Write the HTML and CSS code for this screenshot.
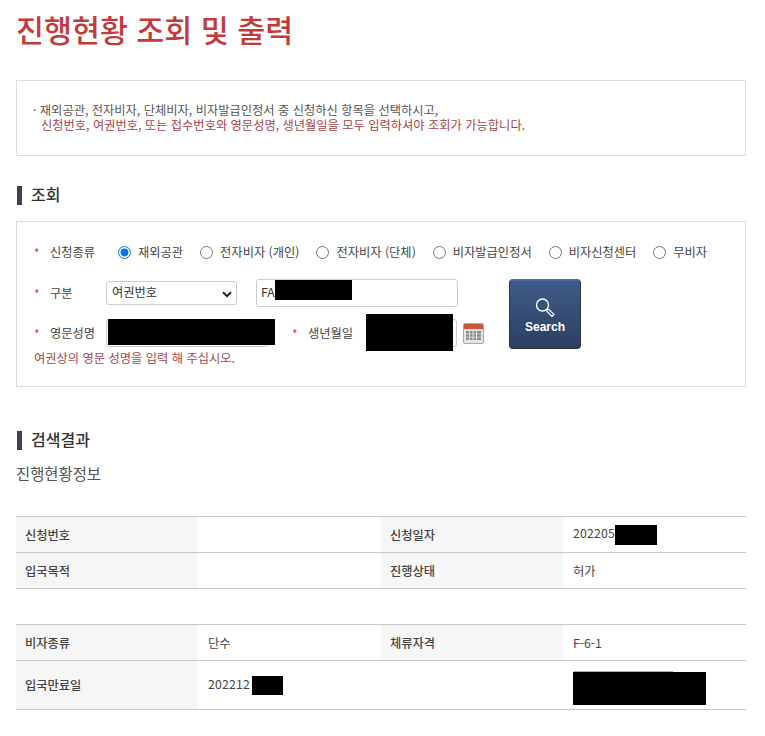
FILE: index.html
```html
<!DOCTYPE html>
<html lang="ko">
<head>
  <meta charset="UTF-8" />
  <title>진행현황 조회 및 출력</title>
  <link rel="stylesheet" href="styles.css">
</head>
<body>
  <h1 class="page-title">진행현황 조회 및 출력</h1>

  <div class="notice">
    <p>· 재외공관, 전자비자, 단체비자, 비자발급인정서 중 신청하신 항목을 선택하시고,</p>
    <p class="notice-red">신청번호, 여권번호, 또는 접수번호와 영문성명, 생년월일을 모두 입력하셔야 조회가 가능합니다.</p>
  </div>

  <h2 class="section-title">조회</h2>

  <!-- 조회 폼 -->
  <form class="search-box">
    <div class="form-row radio-row">
      <span class="star">*</span>
      <span class="label">신청종류</span>
      <label class="radio"><input type="radio" name="kind" checked>재외공관</label>
      <label class="radio"><input type="radio" name="kind">전자비자 (개인)</label>
      <label class="radio"><input type="radio" name="kind">전자비자 (단체)</label>
      <label class="radio"><input type="radio" name="kind">비자발급인정서</label>
      <label class="radio"><input type="radio" name="kind">비자신청센터</label>
      <label class="radio"><input type="radio" name="kind">무비자</label>
    </div>

    <div class="form-main">
      <div class="form-left">
        <div class="form-row type-row">
          <span class="star">*</span>
          <span class="label">구분</span>
          <span class="select">여권번호
            <svg class="chevron" width="10" height="7" viewBox="0 0 10 7"><path d="M1 1.2l4 4 4-4" fill="none" stroke="#222" stroke-width="2"/></svg>
          </span>
          <span class="input input-passport">FA<i class="mask mask-passport"></i></span>
        </div>
        <div class="form-row name-row">
          <span class="star">*</span>
          <span class="label">영문성명</span>
          <span class="input input-name"><i class="mask mask-name"></i></span>
          <span class="star star-birth">*</span>
          <span class="label label-birth">생년월일</span>
          <span class="input input-birth"><i class="mask mask-birth"></i></span>
          <svg class="calendar" width="21" height="21" viewBox="0 0 21 21">
            <rect x="0.5" y="0.5" width="20" height="20" rx="1.5" fill="#e6e6e6" stroke="#a9a9a9"/>
            <path d="M1 2a1 1 0 0 1 1-1h17a1 1 0 0 1 1 1v4H1z" fill="#c9553a"/>
            <path d="M3 8h15v2.4H3zM3 11.3h15v2.4H3zM3 14.6h15V17H3z" fill="#8c8c8c"/>
            <path d="M6.5 8v9M10 8v9M13.5 8v9" stroke="#e6e6e6"/>
          </svg>
        </div>
        <p class="form-error">여권상의 영문 성명을 입력 해 주십시오.</p>
      </div>
      <button type="button" class="search-btn">
        <svg width="24" height="24" viewBox="0 0 24 24">
          <circle cx="9.5" cy="9" r="6" fill="none" stroke="#fff" stroke-width="1.4"/>
          <path d="M14 13.5l2 0 5 5-2 2-5-5z" fill="none" stroke="#fff" stroke-width="1.2"/>
        </svg>
        Search
      </button>
    </div>
  </form>

  <h2 class="section-title result-title">검색결과</h2>
  <h3 class="sub-title">진행현황정보</h3>

  <table class="info-table">
    <tr>
      <th>신청번호</th><td></td>
      <th>신청일자</th><td class="num">202205<i class="mask mask-date1"></i></td>
    </tr>
    <tr>
      <th>입국목적</th><td></td>
      <th>진행상태</th><td>허가</td>
    </tr>
  </table>

  <table class="info-table second">
    <tr>
      <th>비자종류</th><td>단수</td>
      <th>체류자격</th><td>F-6-1</td>
    </tr>
    <tr class="tall">
      <th>입국만료일</th><td class="num">202212<i class="mask mask-date2"></i></td>
      <td></td><td class="big-cell"><i class="mask mask-big"></i></td>
    </tr>
  </table>
</body>
</html>
```

FILE: styles.css
```css
html, body {
  margin: 0;
  padding: 0;
  background: #fff;
  color: #444;
  font-family: "Noto Sans CJK KR", "Liberation Sans", sans-serif;
  font-size: 12.25px;
}

body {
  width: 730px;
  height: 736px;
  padding-left: 16px;
  overflow: hidden;
}

p { margin: 0; }

.page-title {
  margin: 0;
  padding-top: 7px;
  height: 80px;
  box-sizing: border-box;
  font-size: 30.4px;
  line-height: 44px;
  font-weight: 500;
  color: #c33a3a;
}

/* 안내문 */
.notice {
  box-sizing: border-box;
  height: 76px;
  padding: 22px 16px 0;
  border: 1px solid #ddd;
  line-height: 15px;
  color: #555;
}
.notice-red {
  padding-left: 8px;
  color: #a8434a;
}

.section-title {
  margin: 30px 0 16px;
  height: 19px;
  padding-left: 9px;
  margin-left: 1px;
  border-left: 5px solid #3d4450;
  font-size: 16px;
  line-height: 17px;
  font-weight: 500;
  color: #333;
}

/* 조회 폼 */
.search-box {
  box-sizing: border-box;
  height: 166px;
  padding: 21px 17px 0;
  border: 1px solid #ddd;
}

.form-row {
  display: flex;
  align-items: center;
}
.form-row > * { flex-shrink: 0; }

.star {
  width: 16px;
  color: #e03a3a;
  font-size: 12px;
}

.label {
  width: 56px;
  color: #444;
}

.radio-row { height: 18px; }
.radio-row .label { width: 68px; }

.radio {
  display: flex;
  align-items: center;
  margin-right: 17px;
  color: #444;
}
.radio input {
  width: 13px;
  height: 13px;
  margin: 0 7px 0 0;
  accent-color: #0a74e8;
}

.form-main {
  display: flex;
  margin-top: 18px;
}

.form-left { width: 424px; }

.select {
  box-sizing: border-box;
  position: relative;
  width: 131px;
  height: 24px;
  padding-left: 5px;
  border: 1px solid #ccc;
  border-radius: 3px;
  line-height: 20px;
  color: #333;
}
.chevron {
  position: absolute;
  right: 4px;
  top: 9px;
}

.input {
  position: relative;
  display: block;
  box-sizing: border-box;
  height: 28px;
  border: 1px solid #ccc;
  border-radius: 3px;
  background: #fff;
  line-height: 24px;
  color: #333;
}

.input-passport {
  width: 202px;
  margin-left: 19px;
  padding-left: 4px;
}
.input-name { width: 162px; }
.input-birth { width: 91px; }

.name-row { margin-top: 12px; }
.star-birth { margin-left: 24px; }
.label-birth { width: 58px; }
.calendar { margin-left: 6px; }

/* 가림 처리 */
.mask {
  display: inline-block;
  background: #000;
}
.input .mask { position: absolute; }
.mask-passport { left: 18px; top: 0; width: 77px; height: 20px; }
.mask-name { left: 1px; top: -1px; width: 167px; height: 26px; }
.mask-birth { left: -1px; top: -6px; width: 87px; height: 37px; }
.mask-date1 { width: 42px; height: 20px; vertical-align: -7px; }
.mask-date2 { width: 31px; height: 19px; margin-left: 2px; vertical-align: middle; }
.mask-big { position: relative; width: 133px; height: 33px; vertical-align: middle; }
.mask-big::before {
  content: "";
  position: absolute;
  top: -1px;
  left: 1px;
  width: 99px;
  height: 1px;
  background: #aaa;
}

.form-error {
  margin-top: 3px;
  line-height: 16px;
  color: #a8434a;
}

.search-btn {
  display: flex;
  flex-direction: column;
  align-items: center;
  box-sizing: border-box;
  width: 72px;
  height: 70px;
  margin-left: 51px;
  padding: 15px 0 0;
  border: 1px solid #2a3550;
  border-top: 2px solid #4a6a9c;
  border-radius: 4px;
  background: linear-gradient(#3f5b87, #2c3f61);
  color: #fff;
  font-family: "Liberation Sans", sans-serif;
  font-size: 12px;
  font-weight: bold;
  line-height: 14px;
}

.result-title { margin-top: 44px; margin-bottom: 0; }

.sub-title {
  margin: 13px 0 33px;
  font-size: 15.4px;
  line-height: 20px;
  font-weight: 400;
  color: #555;
}

/* 결과 테이블 */
.info-table {
  width: 730px;
  table-layout: fixed;
  border-collapse: collapse;
  border-top: 1px solid #c8c8c8;
}
.info-table.second { margin-top: 35px; }

.info-table tr { height: 36px; }
.info-table tr.tall { height: 49px; }

.info-table th,
.info-table td {
  padding: 0 9px 0 10px;
  border-bottom: 1px solid #c8c8c8;
  text-align: left;
  font-size: 12.25px;
  font-weight: 400;
  color: #444;
}
.info-table th {
  padding-left: 9px;
  background: #f6f6f6;
  font-weight: 500;
}
.info-table tr > :nth-child(odd) { width: 182px; box-sizing: border-box; }
.info-table tr > :nth-child(even) { width: 183px; box-sizing: border-box; }
.info-table .num { letter-spacing: 0.2px; }
.info-table .big-cell { padding-top: 7px; }
```
